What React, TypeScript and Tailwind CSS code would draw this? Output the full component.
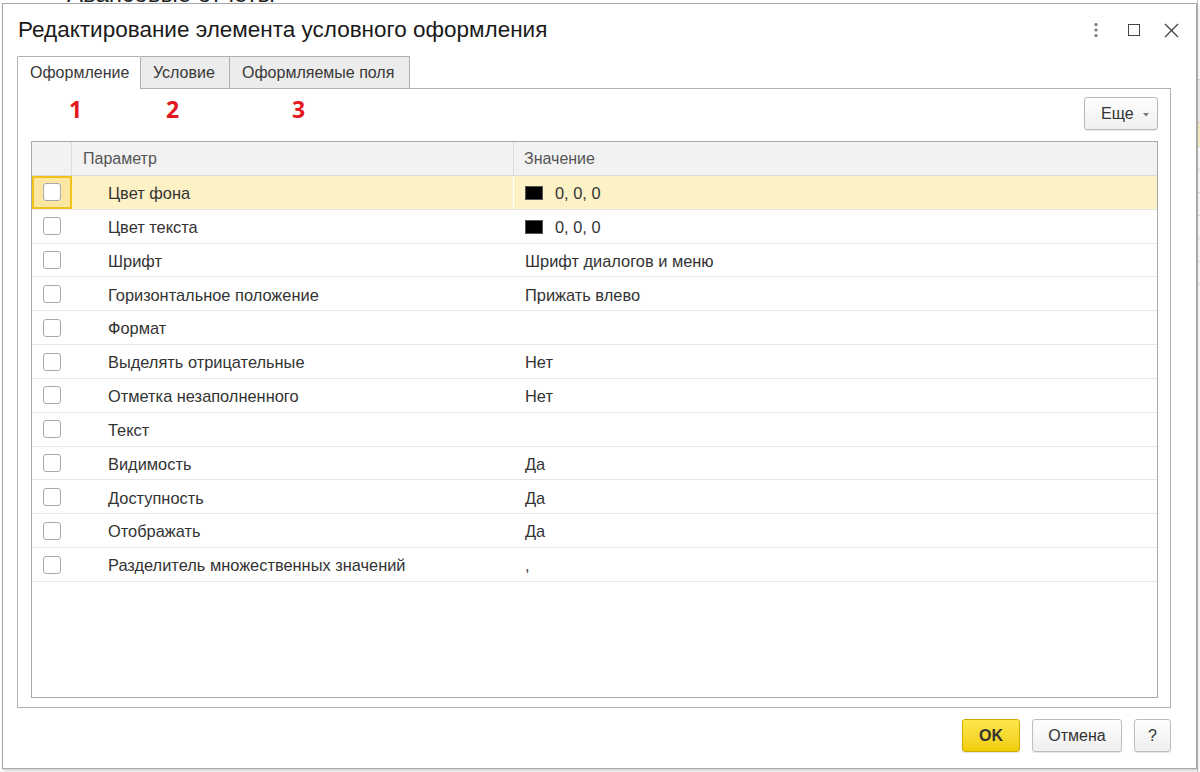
import React from 'react';

const rows: { name: string; value: string; swatch?: boolean }[] = [
  { name: 'Цвет фона', value: '0, 0, 0', swatch: true },
  { name: 'Цвет текста', value: '0, 0, 0', swatch: true },
  { name: 'Шрифт', value: 'Шрифт диалогов и меню' },
  { name: 'Горизонтальное положение', value: 'Прижать влево' },
  { name: 'Формат', value: '' },
  { name: 'Выделять отрицательные', value: 'Нет' },
  { name: 'Отметка незаполненного', value: 'Нет' },
  { name: 'Текст', value: '' },
  { name: 'Видимость', value: 'Да' },
  { name: 'Доступность', value: 'Да' },
  { name: 'Отображать', value: 'Да' },
  { name: 'Разделитель множественных значений', value: ',' },
];

const Checkbox: React.FC = () => (
  <div className="w-[18px] h-[18px] rounded-[3px] border border-[#a9a9a9] bg-white" />
);

const App: React.FC = () => {
  return (
    <div className="relative w-[1200px] h-[772px] overflow-hidden bg-white font-['Liberation_Sans',Arial,sans-serif]">
      {/* page behind the dialog */}
      <div className="flex items-center pl-[24px] -mt-[20px] h-[28px] text-[24px] text-[#222] whitespace-nowrap">
        <span className="text-[#bbb] text-[20px] w-[43px]">←→</span>
        <span>Авансовые отчеты</span>
      </div>
      <div className="absolute right-0 top-0 w-[3px] h-full border-l border-[#c4c4c4] bg-white">
        <div className="h-[80px] border-b border-[#d8d8d8]" />
        <div className="h-[43px] border-b border-[#d8d8d8] bg-[#f2f2f2]" />
        <div className="h-[24px] border-b border-[#e0e0e0] bg-[#fdf2c8]" />
        <div className="h-[23px] border-b border-[#e0e0e0]" />
        <div className="h-[23px] border-b border-[#e0e0e0]" />
        <div className="h-[23px] border-b border-[#e0e0e0]" />
        <div className="h-[23px] border-b border-[#e0e0e0]" />
        <div className="h-[23px] border-b border-[#e0e0e0]" />
        <div className="h-[23px] border-b border-[#e0e0e0]" />
      </div>

      {/* dialog window */}
      <div className="absolute left-[2px] top-[3px] w-[1195px] h-[766px] bg-white border border-[#a8a8a8] shadow-[1px_2px_3px_rgba(0,0,0,0.18)] flex flex-col">
        {/* title bar */}
        <div className="h-[52px] flex items-center pl-[15px] pr-[17px] shrink-0">
          <div className="flex-1 text-[22.5px] text-[#1a1a1a] leading-none">
            Редактирование элемента условного оформления
          </div>
          <div className="flex items-center">
            <svg width="6" height="16" viewBox="0 0 6 16" className="mr-[29px]">
              <circle cx="3" cy="2.5" r="1.6" fill="#777" />
              <circle cx="3" cy="8" r="1.6" fill="#777" />
              <circle cx="3" cy="13.5" r="1.6" fill="#777" />
            </svg>
            <div className="w-[12px] h-[12px] border-[1.5px] border-[#444] mr-[24px]" />
            <svg width="15" height="15" viewBox="0 0 15 15">
              <path d="M1 1 L14 14 M14 1 L1 14" stroke="#444" strokeWidth="1.3" fill="none" />
            </svg>
          </div>
        </div>

        {/* tabs */}
        <div className="h-[32px] flex items-end pl-[14px] shrink-0 relative z-10 text-[16px]">
          <div className="w-[124px] h-[33px] -mb-px bg-white border-x border-t border-[#b0b0b0] rounded-t-[2px] pl-[12px] flex items-center text-[#383838]">
            Оформление
          </div>
          <div className="w-[89px] h-[32px] bg-[#ececec] border-t border-r border-[#b0b0b0] pl-[12px] flex items-center text-[#383838]">
            Условие
          </div>
          <div className="w-[180px] h-[32px] bg-[#ececec] border-t border-r border-[#b0b0b0] pl-[12px] flex items-center text-[#383838]">
            Оформляемые поля
          </div>
        </div>

        {/* panel */}
        <div className="ml-[14px] w-[1154px] h-[620px] border border-[#b0b0b0] flex flex-col pt-[8px] pl-[13px] pr-[12px] pb-[9px] shrink-0">
          <div className="h-[33px] flex items-center justify-between shrink-0">
            <div className="flex pl-[38px] -mt-[8px] text-[23px] font-bold text-[#e3171d] font-['Open_Sans',sans-serif] leading-none">
              <span className="w-[97px]">1</span>
              <span className="w-[126px]">2</span>
              <span>3</span>
            </div>
            <button className="w-[74px] h-[33px] rounded-[3px] border border-[#b9b9b9] bg-gradient-to-b from-white to-[#efefef] shadow-[0_1px_1px_rgba(0,0,0,0.08)] flex items-center pl-[16px] text-[16px] text-[#333]">
              Еще
              <svg width="6" height="4" viewBox="0 0 6 4" className="ml-[9px] mt-[2px]">
                <path d="M0 0 H6 L3 3.5 Z" fill="#777" />
              </svg>
            </button>
          </div>

          {/* table */}
          <div className="mt-[11px] flex-1 border border-[#a9a9a9] flex flex-col overflow-hidden">
            <div className="h-[34px] bg-[#f2f2f2] border-b border-[#dcdcdc] flex text-[16px] text-[#555] shrink-0">
              <div className="w-[40px] border-r border-[#dcdcdc]" />
              <div className="w-[442px] border-r border-[#dcdcdc] pl-[11px] flex items-center">Параметр</div>
              <div className="flex-1 pl-[10px] flex items-center">Значение</div>
            </div>
            {rows.map((r, i) => {
              const selected = i === 0;
              return (
                <div
                  key={r.name}
                  className={`h-[33.83px] shrink-0 flex border-b border-[#e6e6e6] text-[16.4px] text-[#333] ${
                    selected ? 'bg-[#fdf1c6]' : 'bg-white'
                  }`}
                >
                  <div
                    className={`w-[40px] flex items-center justify-center ${
                      selected ? 'border-2 border-[#f3c21a] bg-[#fbe6a2]' : ''
                    }`}
                  >
                    <Checkbox />
                  </div>
                  <div className={`w-[442px] pl-[36px] pt-[2px] flex items-center ${selected ? 'border-r border-white' : ''}`}>
                    {r.name}
                  </div>
                  <div className="flex-1 pl-[11px] pt-[2px] flex items-center">
                    {r.swatch && <div className="w-[18px] h-[14px] bg-black border border-[#555] mr-[12px]" />}
                    {r.value}
                  </div>
                </div>
              );
            })}
          </div>
        </div>

        {/* footer buttons */}
        <div className="flex justify-end gap-[12px] pt-[11px] pr-[25px] text-[16px]">
          <button className="w-[58px] h-[33px] rounded-[3px] border border-[#cfae00] bg-gradient-to-b from-[#fde74a] to-[#f1cd00] font-bold text-[#333] shadow-[0_1px_1px_rgba(0,0,0,0.12)]">
            OK
          </button>
          <button className="w-[90px] h-[33px] rounded-[3px] border border-[#bdbdbd] bg-gradient-to-b from-white to-[#eeeeee] text-[#333] shadow-[0_1px_1px_rgba(0,0,0,0.1)]">
            Отмена
          </button>
          <button className="w-[37px] h-[33px] rounded-[3px] border border-[#bdbdbd] bg-gradient-to-b from-white to-[#eeeeee] text-[#333] shadow-[0_1px_1px_rgba(0,0,0,0.1)]">
            ?
          </button>
        </div>
      </div>
    </div>
  );
};

export default App;
